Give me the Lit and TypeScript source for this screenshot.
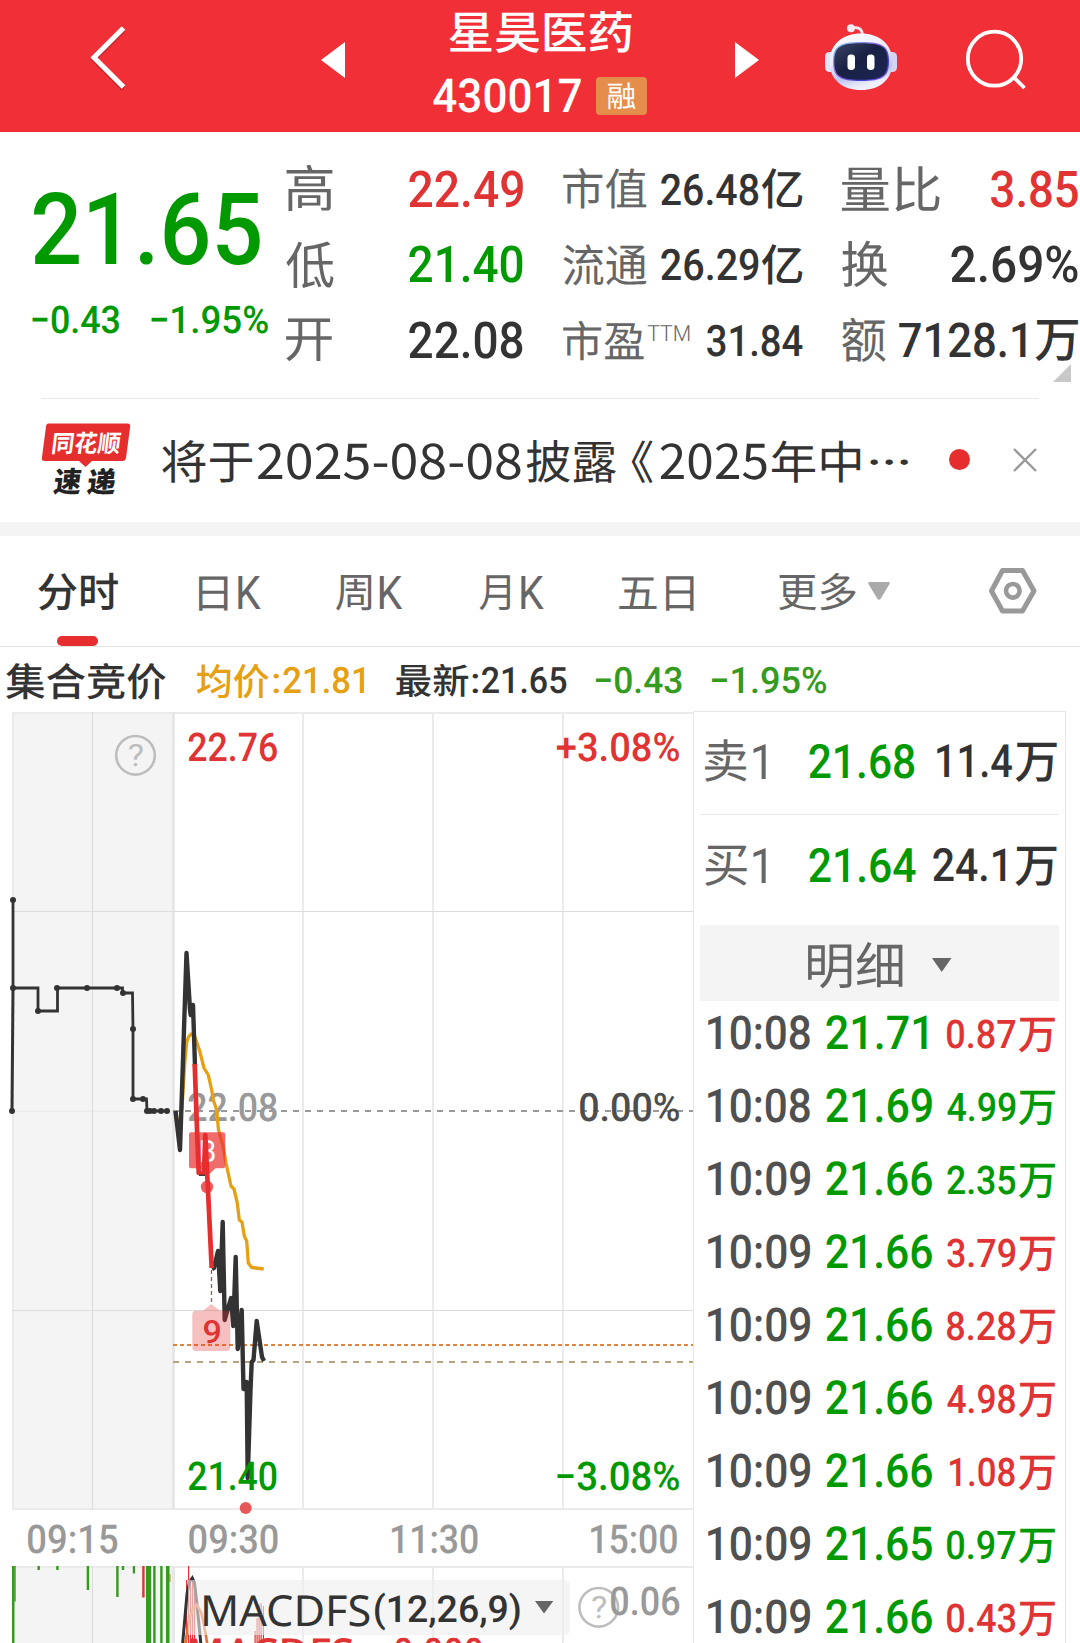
import { LitElement, html, svg, css } from "lit";
import { customElement, property } from "lit/decorators.js";

const FAMILY = 'Roboto, "Noto Sans CJK SC", sans-serif';
const HAN = '"Noto Sans CJK SC", sans-serif';
const HUMANIST = '"Noto Sans", "Noto Sans CJK SC", sans-serif';
const RED = "#e03333";
const GREEN = "#009900";
const INK = "#333333";
const MUTED = "#666666";
const SOFT = "#999999";

const pen = document.createElement("canvas").getContext("2d")!;
const EM = 1000;

/** Condensed text whose visible bounds fill the box x, y, w, h. */
function inkText(
  text: string, x: number, y: number, w: number, h: number,
  color: string, weight = 500, family = FAMILY,
) {
  pen.font = `${weight} ${EM}px ${family}`;
  const m = pen.measureText(text);
  const sy = h / (m.actualBoundingBoxAscent + m.actualBoundingBoxDescent);
  const sx = w / (m.actualBoundingBoxLeft + m.actualBoundingBoxRight);
  const tx = x + m.actualBoundingBoxLeft * sx;
  const ty = y + m.actualBoundingBoxAscent * sy;
  return svg`<text transform="translate(${tx.toFixed(2)} ${ty.toFixed(2)}) scale(${(sx / sy).toFixed(4)} 1)"
    font-family=${family} font-weight=${weight} font-size=${(EM * sy).toFixed(2)} text-rendering="geometricPrecision" fill=${color}>${text}</text>`;
}

@customElement("ink-text")
export class InkText extends LitElement {
  static styles = css`
    :host { display: block; flex: none; }
    .box { display: block; overflow: visible; }
  `;
  @property() text = "";
  @property() color = INK;
  @property() family = FAMILY;
  @property({ type: Number }) w = 10;
  @property({ type: Number }) h = 10;
  @property({ type: Number }) pad = 0;
  @property({ type: Number }) dy = 0;
  @property({ type: Number }) weight = 500;
  render() {
    return html`<svg class="box" width=${this.w + this.pad} height=${this.h}>
      ${inkText(this.text, this.pad, this.dy, this.w, this.h, this.color, this.weight, this.family)}
    </svg>`;
  }
}

const t = (text: string, w: number, h: number, color = INK, weight = 500, pad = 0, dy = 0, family = FAMILY) =>
  html`<ink-text .text=${text} .w=${w} .h=${h} .color=${color} .weight=${weight} .pad=${pad} .dy=${dy} .family=${family}></ink-text>`;

@customElement("top-bar")
export class TopBar extends LitElement {
  static styles = css`
    :host { display: block; }
    .bar { height: 132px; background: #f12f37; display: flex; align-items: flex-start; }
    .icon { display: block; flex: none; }
    .back { margin: 24px 0 0 87px; }
    .prev { margin: 42px 0 0 194px; }
    .next { margin: 42px 0 0 88px; }
    .bot { margin: 24px 0 0 66px; }
    .find { margin: 28px 0 0 67px; }
    .name { width: 214px; margin-left: 88px; padding-top: 10px; display: flex; flex-direction: column; align-items: center; gap: 24px; }
    .code { display: flex; align-items: center; gap: 15px; height: 38px; }
    .tag { width: 51px; height: 38px; border-radius: 4px; background: #e58e4b; display: flex; align-items: center; justify-content: center; }
  `;
  render() {
    return html`<header class="bar">
      <svg class="icon back" width="40" height="67"><path d="M36.5 4 L7 33.5 L36.5 63" fill="none" stroke="#000" stroke-opacity=".18" stroke-width="5" transform="translate(0 2)"/><path d="M36.5 4 L7 33.5 L36.5 63" fill="none" stroke="#fff" stroke-width="5"/></svg>
      <svg class="icon prev" width="24" height="36"><path d="M24 0 V36 L0 18Z" fill="#fff"/></svg>
      <div class="name">
        ${t("星昊医药", 183, 43, "#fff", 500)}
        <div class="code">
          ${t("430017", 148, 35, "#fff", 500, 0, -1)}
          <div class="tag">${t("融", 27.5, 27.5, "#fff", 400)}</div>
        </div>
      </div>
      <svg class="icon next" width="24" height="36"><path d="M0 0 V36 L24 18Z" fill="#fff"/></svg>
      <svg class="icon bot" width="72" height="66" viewBox="0 0 72 66">
        <defs>
          <linearGradient id="shell" x1="0" y1="0" x2="0.3" y2="1"><stop offset="0" stop-color="#ffffff"/><stop offset=".5" stop-color="#ece9fb"/><stop offset=".8" stop-color="#bfc4ee"/><stop offset="1" stop-color="#eef0ff"/></linearGradient>
          <linearGradient id="rim" x1="0" y1="0" x2="1" y2="1"><stop offset="0" stop-color="#7fd8f0"/><stop offset=".45" stop-color="#8a5be0"/><stop offset=".75" stop-color="#3d3fd0"/><stop offset="1" stop-color="#9a62f0"/></linearGradient>
          <linearGradient id="visor" x1="0" y1="0" x2="1" y2="1"><stop offset="0" stop-color="#3b4464"/><stop offset=".45" stop-color="#182043"/><stop offset="1" stop-color="#1c2654"/></linearGradient>
        </defs>
        <path d="M27 4 Q37 2 37.500 11" fill="none" stroke="#f3e6f2" stroke-width="2.800"/>
        <circle cx="26" cy="4.200" r="4" fill="#f7e9f2"/>
        <rect x="0" y="28" width="10" height="20" rx="4.500" fill="#e4e3f7"/>
        <rect x="62" y="28" width="10" height="20" rx="4.500" fill="#d3d5f2"/>
        <path d="M36 9.500 C54 9.500 67.500 20 67.500 38 C67.500 56 54 66 36 66 C18 66 4.500 56 4.500 38 C4.500 20 18 9.500 36 9.500Z" fill="url(#shell)"/>
        <path d="M36 18 C58 18 64 22 64 37.500 C64 53 58 57 36 57 C14 57 8 53 8 37.500 C8 22 14 18 36 18Z" fill="url(#rim)"/>
        <path d="M36 19.300 C57 19.300 62.700 23 62.700 37.500 C62.700 52 57 55.700 36 55.700 C15 55.700 9.300 52 9.300 37.500 C9.300 23 15 19.300 36 19.300Z" fill="url(#visor)"/>
        <rect x="22.500" y="30.500" width="7.500" height="15.500" rx="3.400" fill="#fff"/>
        <rect x="42" y="30.500" width="7.500" height="15.500" rx="3.400" fill="#fff"/>
      </svg>
      <svg class="icon find" width="66" height="66"><ellipse cx="30.500" cy="30.700" rx="26.700" ry="27" fill="none" stroke="#fff" stroke-width="3.800"/><path d="M49.500 49 L60.500 60" stroke="#fff" stroke-width="3.800"/></svg>
    </header>`;
  }
}

@customElement("quote-board")
export class QuoteBoard extends LitElement {
  static styles = css`
    :host { display: block; }
    .board { position: relative; height: 266px; display: flex; }
    .price { width: 254px; padding: 59px 0 0 32px; display: flex; flex-direction: column; gap: 39px; }
    .change { display: flex; gap: 32px; }
    .stats { padding-top: 19px; display: grid; grid-template-columns: 237px 240px 236px; column-gap: 39.500px; grid-auto-rows: 75.500px; }
    .cell { display: flex; align-items: center; justify-content: space-between; }
    .group { display: flex; align-items: center; }
    .fold { position: absolute; right: 9px; bottom: 16px; }
  `;
  cell(label: unknown, value: unknown) {
    return html`<div class="cell"><div class="group">${label}</div><div class="group">${value}</div></div>`;
  }
  render() {
    return html`<section class="board">
      <div class="price">
        ${t("21.65", 227, 75, GREEN, 500, 1)}
        <div class="change">${t("−0.43", 87, 28.5, GREEN)}${t("−1.95%", 117, 28.5, GREEN)}</div>
      </div>
      <div class="stats">
        ${this.cell(t("高", 46.5, 47, MUTED, 400), t("22.49", 114, 38, RED))}
        ${this.cell(t("市值", 83.5, 41.5, MUTED, 400), html`${t("26.48", 97.5, 32.5)}${t("亿", 41, 41, INK, 500, 3.5)}`)}
        ${this.cell(t("量比", 98, 46, MUTED, 400), t("3.85", 87, 38, RED))}
        ${this.cell(t("低", 47.5, 47.5, MUTED, 400), t("21.40", 114, 38, GREEN))}
        ${this.cell(t("流通", 84, 41.5, MUTED, 400), html`${t("26.29", 97.5, 32.5)}${t("亿", 41, 41, INK, 500, 3.5)}`)}
        ${this.cell(t("换", 46, 47, MUTED, 400), t("2.69%", 127, 38))}
        ${this.cell(t("开", 46, 43.5, MUTED, 400), t("22.08", 114, 38))}
        ${this.cell(html`${t("市盈", 81, 40, MUTED, 400)}${t("TTM", 42, 16, MUTED, 300, 3.5, -7)}`, t("31.84", 95.5, 32.5))}
        ${this.cell(t("额", 44, 45, MUTED, 400), html`${t("7128.1", 127, 36)}${t("万", 43.5, 42, INK, 500, 9)}`)}
      </div>
      <svg class="fold" width="18" height="18"><path d="M18 0 V18 H0Z" fill="#c8c8c8"/></svg>
    </section>`;
  }
}

@customElement("news-strip")
export class NewsStrip extends LitElement {
  static styles = css`
    :host { display: block; }
    .strip { height: 123px; margin: 0 41px; border-top: 1px solid #e9e9e9; display: flex; align-items: center; }
    .logo { display: block; flex: none; margin-top: -2px; overflow: visible; }
    .line { display: flex; align-items: center; padding-left: 31px; margin-top: 2px; }
    .dot { width: 21px; height: 21px; border-radius: 50%; background: #e62e2e; margin: -2px 0 0 40.500px; }
    .close { display: block; margin: -2px 0 0 43px; }
    .band { height: 14px; background: #f4f4f4; }
  `;
  render() {
    return html`<section class="strip">
        <svg class="logo" width="90" height="74">
          <path d="M7.500 0.500 H86.500 Q89.500 0.500 89.200 3.500 L85 35 Q84.500 38 81.500 38 H51 L44.500 44 L38 38 H3.500 Q0.500 38 0.900 35 L5 3.500 Q5.300 0.500 7.500 0.500Z" fill="#e62e2e"/>
          <g transform="translate(2.600 0) skewX(-7)">${inkText("同花顺", 12, 9, 67, 23, "#fff", 700)}</g>
          <g transform="translate(7.200 0) skewX(-7)">${inkText("速", 13, 45, 27, 27.5, "#222", 900)}${inkText("递", 47, 45, 28, 27.5, "#222", 900)}</g>
        </svg>
        <div class="line">
          ${t("将于", 90.5, 43.5, INK, 400)}
          ${t("2025-08-08", 263.3, 37, INK, 400, 4.6, 0, HAN)}
          ${t("披露", 89.8, 43.5, INK, 400, 6.7)}
          ${t("《", 21.6, 43.5, INK, 400, 14.2)}
          ${t("2025", 106.6, 37, INK, 400, 7.4, 0, HAN)}
          ${t("年中", 88.3, 43.5, INK, 400, 5.1)}
          ${t("···", 38.5, 6, INK, 500, 10)}
        </div>
        <div class="dot"></div>
        <svg class="close" width="24" height="24"><path d="M1 1 L23 23 M23 1 L1 23" stroke="#999" stroke-width="2.300"/></svg>
      </section>
      <div class="band"></div>`;
  }
}

@customElement("period-tabs")
export class PeriodTabs extends LitElement {
  static styles = css`
    :host { display: block; }
    .tabs { height: 110px; border-bottom: 1px solid #e4e4e4; display: flex; align-items: flex-start; padding-left: 37.500px; }
    .tab { display: flex; padding-top: 38px; flex: none; }
    .active { width: 80px; height: 110px; padding-top: 37px; box-sizing: border-box; flex-direction: column; align-items: center; justify-content: space-between; }
    .mark { width: 41px; height: 10px; border-radius: 5px; background: #e62e2e; }
    .day { margin-left: 81px; }
    .week { margin-left: 75.500px; }
    .month { margin-left: 76.500px; }
    .five { margin-left: 75px; }
    .more { margin-left: 84.500px; }
    .arrow { display: block; margin: 8px 0 0 12px; }
    .gear { display: block; margin: 31px 0 0 98.500px; }
    .info { height: 64px; display: flex; align-items: center; padding-left: 6px; }
  `;
  render() {
    const amber = "#e6a013";
    const leaf = "#349a20";
    return html`<nav class="tabs">
        <div class="tab active">${t("分时", 80, 38.3, INK, 500)}<div class="mark"></div></div>
        <div class="tab day">${t("日", 29, 35, MUTED, 400, 0, 2)}${t("K", 23, 33.3, MUTED, 400, 10.3, 2)}</div>
        <div class="tab week">${t("周", 35.5, 36, MUTED, 400, 0, 1)}${t("K", 23, 33.3, MUTED, 400, 7.8, 2)}</div>
        <div class="tab month">${t("月", 31, 36, MUTED, 400, 0, 1)}${t("K", 23, 33.3, MUTED, 400, 11.3, 2)}</div>
        <div class="tab five">${t("五日", 75, 35.3, MUTED, 400, 0, 2)}</div>
        <div class="tab more">${t("更多", 77, 38, MUTED, 400, 0, -1)}
          <svg class="arrow" width="22" height="18"><path d="M1.500 0 H20.500 Q22.500 0 21.500 2 L12.500 17 Q11 18.500 9.500 17 L0.500 2 Q-.5 0 1.500 0Z" fill="#aaa"/></svg>
        </div>
        <svg class="gear" width="50" height="48"><path d="M14.500 3.500 H34.500 L46 24 L34.500 44 H14.500 L3.500 24Z" fill="none" stroke="#999" stroke-width="5" stroke-linejoin="round"/><circle cx="24.800" cy="23.800" r="6.800" fill="none" stroke="#999" stroke-width="4.600"/></svg>
      </nav>
      <div class="info">
        ${t("集合竞价", 160, 37, INK, 500, 0, 1.5)}
        ${t("均价", 72.3, 35, amber, 500, 31, 1)}${t(":", 6, 20, amber, 500, 4, 4.5)}${t("21.81", 81.3, 27.3, amber, 500, 4.3, 1)}
        ${t("最新", 72.3, 34, INK, 500, 31, 1)}${t(":", 6, 20, INK, 500, 4, 4.5)}${t("21.65", 84.5, 27.3, INK, 500, 3.8, 1)}
        ${t("−0.43", 86, 27.3, leaf, 500, 29.5, 1)}${t("−1.95%", 115, 27.3, leaf, 500, 29.5, 1)}
      </div>`;
  }
}

/** Coordinates share the page's pixel grid; the chart's viewBox shifts them into place. */
const AUCTION = "13,900 13,988 38,988 38,1011 57.500,1011 57.500,988 122.500,988 122.500,993 132.500,993 133,1029 133,1099 146.500,1099 147,1111 167,1111";
const AUCTION_DOTS = [[13, 900], [13, 988], [12, 1111], [38, 1011], [57, 988], [87, 988], [117, 988], [123, 993], [133, 1029], [133, 1099], [143, 1099], [147, 1111], [150, 1111], [154, 1111], [161, 1111], [167, 1111]];
const AVERAGE = "175,1111 178,1130 182,1107 185,1060 186.700,1042 188.500,1037 191,1034 195,1037 200,1052 204,1068 208.300,1075 211.700,1090 213.300,1100 216.700,1110 218.500,1130 223.300,1147 226,1163 231,1186 234,1189 237.300,1203 239.300,1220 242,1222 244.300,1236 246.700,1241 248.300,1263 251.700,1267.500 256,1268 263.700,1269";
const OPENING = "175.500,1111 180,1150 182,1090 186.500,953 190,1010 190.700,1015 193,1005 195,1066";
const FALL = "194.700,1064 196.700,1121 198.700,1173 204,1173 205.300,1135 207.500,1180 211.700,1268";
const RECENT = "212,1269 214,1268 218,1251 220.300,1291 222.700,1222 224.700,1320 231,1298 233.300,1326 235.700,1257 237.700,1349 241.700,1310 243.500,1389 246.700,1382 247.700,1478 250.500,1390 251.700,1362 253.500,1360 256.700,1321 262,1357 264,1361";
const VOLUME: [number, number, number, string?][] = [
  [12, 2.5, 1643], [14.3, 1.4, 1601.5], [37.5, 2.4, 1570], [56.2, 2.4, 1570], [86.7, 2.4, 1590], [116.2, 2.4, 1597], [121.8, 2.4, 1570],
  [132.8, 2.2, 1573.5], [142.2, 2.4, 1597.5, RED], [146, 5.2, 1643], [153.2, 2.4, 1643], [160.2, 2.4, 1643], [166, 3.5, 1643],
];

@customElement("trend-chart")
export class TrendChart extends LitElement {
  static styles = css`
    :host { display: block; }
    .chart { display: block; }
  `;
  help(x: number, y: number) {
    return svg`<circle cx=${x} cy=${y} r="19.300" fill="none" stroke="#bdbdbd" stroke-width="2.600"/>${inkText("?", x - 6.7, y - 11.5, 14, 23, "#bdbdbd", 400)}`;
  }
  render() {
    return html`<svg class="chart" width="693" height="932" viewBox="0 711 693 932">
      <rect x="12" y="712" width="161" height="798" fill="#f4f4f4"/>
      <rect x="12" y="1566" width="161" height="77" fill="#f4f4f4"/>
      <g fill="#ebebeb">
        <rect x="12" y="712" width="681" height="2"/><rect x="12" y="1508" width="681" height="2"/><rect x="12" y="1566" width="681" height="2"/>
        <rect x="12" y="712" width="2" height="798"/><rect x="12" y="1110.500" width="161" height="1.500"/>
        ${[302, 432, 562].map((x) => svg`<rect x=${x} y="712" width="2" height="798"/><rect x=${x} y="1566" width="2" height="77"/>`)}
      </g>
      <g fill="#e7e7e7"><rect x="172" y="712" width="3" height="798"/><rect x="172" y="1566" width="3" height="77"/></g>
      <g fill="#dcdcdc">
        <rect x="92" y="712" width="1" height="798"/><rect x="92" y="1566" width="1" height="77"/>
        <rect x="12" y="911" width="681" height="1"/><rect x="12" y="1310" width="681" height="1"/>
      </g>
      <path d="M173 1111 H693" stroke="#999" stroke-width="2" stroke-dasharray="6 6"/>
      <path d="M173 1345 H693" stroke="#e5833a" stroke-width="2" stroke-dasharray="4 3"/>
      <path d="M173 1362 H693" stroke="#b8a57f" stroke-width="2" stroke-dasharray="6 6"/>

      ${this.help(135.5, 755.3)}
      ${inkText("22.08", 188.3, 1092.3, 88.7, 29.5, SOFT)}
      <polyline points="13,988 12,1111" stroke="#333" stroke-width="3"/>
      <polyline points=${AUCTION} fill="none" stroke="#333" stroke-width="2.800"/>
      ${AUCTION_DOTS.map(([x, y]) => svg`<circle cx=${x} cy=${y} r="3" fill="#333"/>`)}
      <polyline points=${AVERAGE} fill="none" stroke="#e6a013" stroke-width="3.300" stroke-linejoin="round"/>
      <polyline points=${OPENING} fill="none" stroke="#333" stroke-width="4.400" stroke-linejoin="round"/>
      <polyline points=${RECENT} fill="none" stroke="#333" stroke-width="4.400" stroke-linejoin="round"/>

      <path d="M191 1132.300 H223 Q225.300 1132.300 225.300 1134.500 V1166 Q225.300 1168.300 223 1168.300 H215.500 L207.500 1176 L200 1168.300 H191 Q189 1168.300 189 1166 V1134.500 Q189 1132.300 191 1132.300Z" fill="#e92f31" fill-opacity=".7"/>
      <circle cx="207" cy="1187" r="6.200" fill="#e92f31" fill-opacity=".78"/>
      ${inkText("B", 201, 1139.5, 14, 22, "#fff", 400)}
      <polyline points=${FALL} fill="none" stroke="#e62e2e" stroke-width="4.700" stroke-linejoin="round"/>
      <path d="M199 1175.300 H205" stroke="#333" stroke-width="1.300"/>
      <path d="M211.500 1270 V1304" stroke="#b05050" stroke-width="1.300" stroke-dasharray="4 3"/>
      <path d="M196 1310.700 H203 L211.300 1304 L220 1310.700 H226.500 Q230.300 1310.700 230.300 1314.500 V1347 Q230.300 1351 226.500 1351 H196 Q192.300 1351 192.300 1347 V1314.500 Q192.300 1310.700 196 1310.700Z" fill="#e62e2e" fill-opacity=".3"/>
      ${inkText("9", 203.5, 1319, 16.5, 24, RED, 500)}

      ${inkText("22.76", 188.3, 732, 88.7, 29.7, RED)}
      ${inkText("+3.08%", 557, 732, 122.3, 29.7, RED)}
      ${inkText("0.00%", 580, 1092.3, 99.3, 29.5, "#4d4d4d")}
      ${inkText("21.40", 188.3, 1460.7, 88.5, 29.7, GREEN)}
      ${inkText("−3.08%", 557, 1460.7, 122.3, 29.7, GREEN)}
      <circle cx="245.700" cy="1508" r="6" fill="#e85858"/>
      ${inkText("09:15", 28, 1523.5, 89.3, 29.7, SOFT)}
      ${inkText("09:30", 189.3, 1523.5, 88.7, 29.7, SOFT)}
      ${inkText("11:30", 391.7, 1523.5, 86.3, 29.7, SOFT)}
      ${inkText("15:00", 591, 1523.5, 86.3, 29.7, SOFT)}

      ${VOLUME.map(([x, w, bottom, color]) => svg`<rect x=${x} y="1566" width=${w} height=${bottom - 1566} fill=${color ?? "#349a20"}/>`)}
      <rect x="169.500" y="1574" width="1" height="8" fill="#b07a20"/>
      <g fill="#e03333">
        ${[[186, 1580], [188, 1566], [190, 1578], [192, 1580], [194, 1588]].map(([x, y]) => svg`<rect x=${x} y=${y} width="1.200" height=${1643 - y}/>`)}
        ${[[254.500, 1631], [256.500, 1618], [258.500, 1605], [260.500, 1603], [262.800, 1606]].map(([x, y]) => svg`<rect x=${x} y=${y} width="1.200" height=${1643 - y}/>`)}
      </g>
      <polyline points="182.500,1645 187,1594 189.500,1582 192.300,1578 194.500,1583 196.700,1602 201,1645" fill="none" stroke="#333" stroke-width="3"/>
      <polyline points="185,1645 189,1621 193,1608 196.700,1605 201,1612 204,1625 207.500,1645" fill="none" stroke="#ee6f2d" stroke-width="2.600"/>
      <path d="M188 1580 H564 Q570 1580 570 1586 V1629 Q570 1635 564 1635 H188Z" fill="#eeeeee" fill-opacity=".6"/>
      ${inkText("MACDFS", 204, 1594.3, 166, 32, INK, 400, HUMANIST)}
      ${inkText("(12,26,9)", 375, 1592.3, 145, 38.4, INK)}
      <path d="M535 1601 H553.300 L544 1613.500Z" fill="#666"/>
      ${inkText("MACDFS", 190, 1637.3, 163, 31, RED, 500, HUMANIST)}
      ${inkText("0.000", 395, 1637.3, 87.5, 29.5, RED)}
      ${this.help(598.7, 1607.3)}
      ${inkText("0.06", 611, 1586, 68.3, 29.7, SOFT)}
    </svg>`;
  }
}

const TRADES: [string, string, string, boolean][] = [
  ["10:08", "21.71", "0.87", true], ["10:08", "21.69", "4.99", false], ["10:09", "21.66", "2.35", false],
  ["10:09", "21.66", "3.79", true], ["10:09", "21.66", "8.28", true], ["10:09", "21.66", "4.98", true],
  ["10:09", "21.66", "1.08", true], ["10:09", "21.65", "0.97", false], ["10:09", "21.66", "0.43", true],
];

@customElement("order-panel")
export class OrderPanel extends LitElement {
  static styles = css`
    :host { display: block; }
    .panel { box-sizing: border-box; width: 373px; height: 932px; border: 1px solid #e8e8e8; border-bottom: 0; padding: 0 6px; overflow: hidden; }
    .level { padding: 0 2px 0 5px; display: grid; grid-template-columns: 103.500px 1fr auto; align-items: center; box-sizing: border-box; }
    .ask { height: 103px; padding-bottom: 4px; border-bottom: 1px solid #e8e8e8; }
    .bid { height: 110px; padding-bottom: 9px; }
    .pair { display: flex; align-items: center; }
    .head { height: 76px; background: #f4f4f4; display: flex; align-items: center; justify-content: center; gap: 29px; padding-left: 1px; box-sizing: border-box; }
    .caret { display: block; margin-top: 3px; }
    .trade { height: 73px; box-sizing: border-box; padding: 13.700px 3.500px 0 8px; display: grid; grid-template-columns: 118px 1fr auto; align-items: start; }
  `;
  render() {
    return html`<aside class="panel">
      <div class="level ask"><div class="pair">${t("卖", 41.7, 43.3, MUTED, 400)}${t("1", 12.5, 35, MUTED, 400, 6.3, 1)}</div>${t("21.68", 105.7, 35.5, GREEN)}<div class="pair">${t("11.4", 75, 33.6)}${t("万", 42, 40, INK, 500, 3.3, 1)}</div></div>
      <div class="level bid"><div class="pair">${t("买", 41.7, 41, MUTED, 400)}${t("1", 12.5, 35, MUTED, 400, 6.3)}</div>${t("21.64", 106.7, 35.5, GREEN, 500, 0, -1)}<div class="pair">${t("24.1", 72.7, 34.3, INK, 500, 0, -1)}${t("万", 42, 40, INK, 500, 9)}</div></div>
      <div class="head">${t("明细", 94.7, 47.4, MUTED, 400, 0, 2)}<svg class="caret" width="20" height="14"><path d="M0 0 H19.500 L9.700 14Z" fill="#666"/></svg></div>
      ${TRADES.map(([time, price, vol, up]) => {
        const color = up ? RED : GREEN;
        return html`<div class="trade">
          ${t(time, 102.3, 35, "#505050")}${t(price, price.endsWith("1") ? 101 : 106, 35.2, GREEN)}
          <div class="pair">${t(vol, vol.startsWith("1") ? 65 : 68.3, 29.6, color, 500, 0, 1.5)}${t("万", 37, 35.4, color, 500, 3.3, 2.5)}</div>
        </div>`;
      })}
    </aside>`;
  }
}

@customElement("app-root")
export class AppRoot extends LitElement {
  static styles = css`
    :host { display: block; }
    .page { width: 1080px; height: 1643px; overflow: hidden; background: #fff; font-family: "Noto Sans CJK SC", sans-serif; display: flex; flex-direction: column; }
    .main { display: flex; align-items: flex-start; }
  `;
  render() {
    return html`<div class="page">
      <top-bar></top-bar>
      <quote-board></quote-board>
      <news-strip></news-strip>
      <period-tabs></period-tabs>
      <main class="main"><trend-chart></trend-chart><order-panel></order-panel></main>
    </div>`;
  }
}
